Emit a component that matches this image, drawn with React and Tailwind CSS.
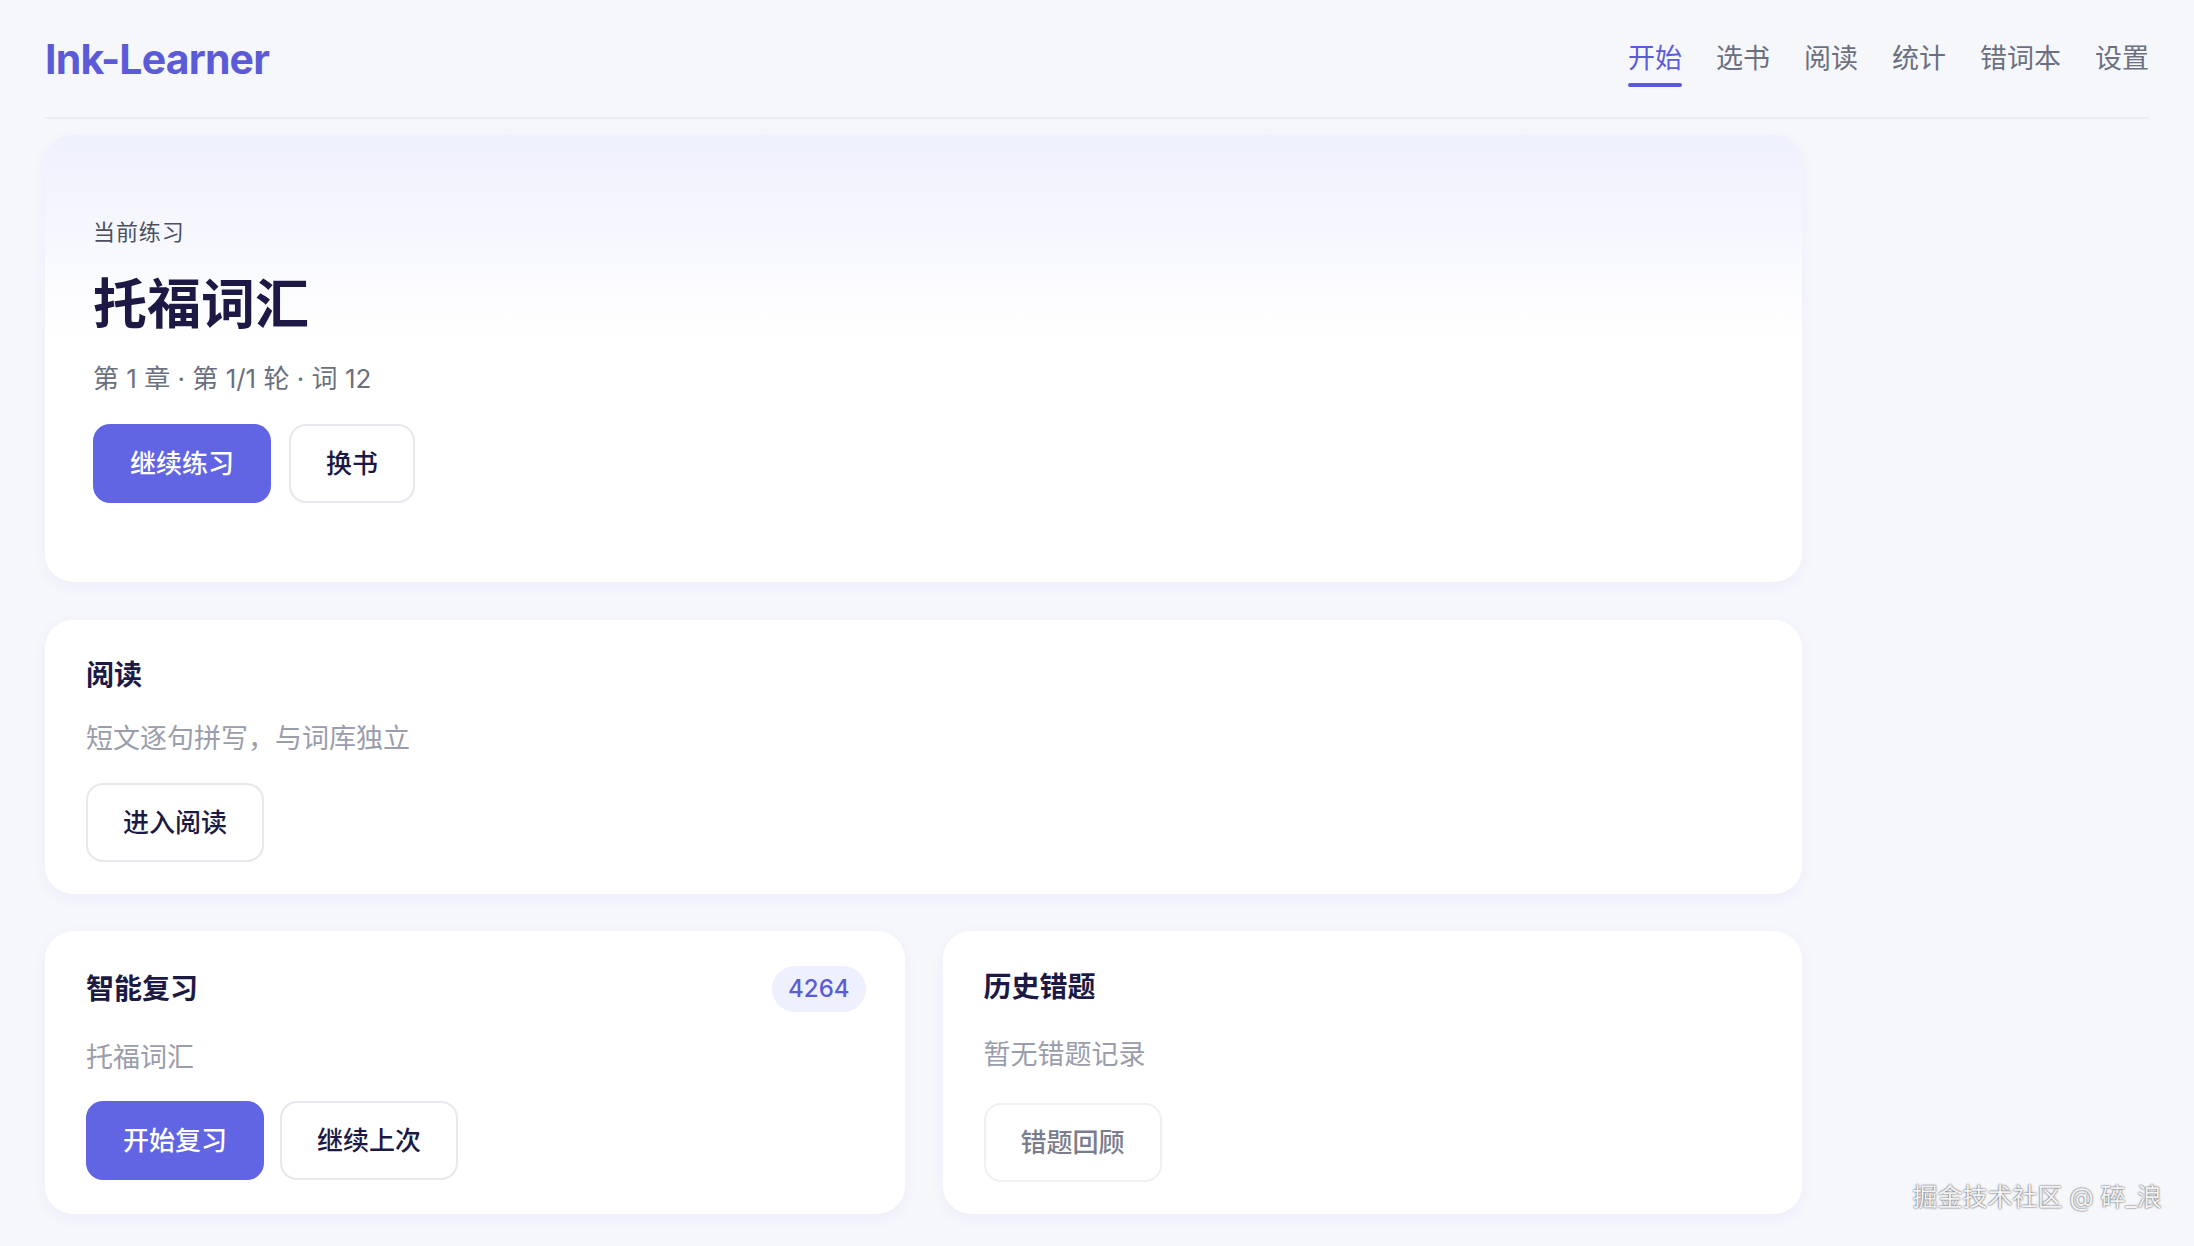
import React from "react";

// Ink-Learner home: header nav + practice cards

const NAV = ["开始", "选书", "阅读", "统计", "错词本", "设置"];

function Button({ primary, muted, children }) {
  if (primary) {
    return (
      <button className="h-[79px] rounded-[17px] bg-[#6265e3] px-[37px] text-[26px] font-medium text-white">
        {children}
      </button>
    );
  }
  return (
    <button
      className={
        "h-[79px] rounded-[17px] border-2 bg-white px-[35px] text-[26px] font-medium " +
        (muted ? "border-[#f0f0f4] text-[#7b7d8c]" : "border-[#e7e7ee] text-[#1c1a45]")
      }
    >
      {children}
    </button>
  );
}

function Card({ className = "", children }) {
  return (
    <div
      className={
        "rounded-[28px] bg-white shadow-[0_4px_14px_rgba(99,102,241,0.07)] " + className
      }
    >
      {children}
    </div>
  );
}

export default function App() {
  return (
    <div className="relative min-h-screen bg-[#f6f7fb] px-[45px] font-['Inter','Noto_Sans_CJK_SC',sans-serif] antialiased">
      <header className="flex h-[119px] items-center justify-between border-b-2 border-[#eceef4]">
        <h1 className="pt-[2px] text-[41px] font-bold leading-none tracking-[-0.02em] text-[#5b5bd8]">
          Ink-Learner
        </h1>
        <nav className="flex gap-[34px] pt-2">
          {NAV.map((item, i) => (
            <div key={item} className="flex flex-col items-stretch gap-1">
              <span
                className={
                  "text-[27px] leading-[40px] " +
                  (i === 0 ? "text-[#5b5bd8]" : "text-[#6b7080]")
                }
              >
                {item}
              </span>
              <span
                className={"h-[4px] rounded-full " + (i === 0 ? "bg-[#5b5bd8]" : "bg-transparent")}
              />
            </div>
          ))}
        </nav>
      </header>

      <main className="mt-[16px] flex w-[1757px] flex-col gap-[38px] pb-[32px]">
        {/* current practice */}
        <Card className="flex h-[447px] flex-col bg-gradient-to-b from-[#eef0fd] via-white via-45% to-white px-[48px] pt-[82px]">
          <p className="text-[22px] leading-[30px] tracking-[0.04em] text-[#4b5060]">当前练习</p>
          <h2 className="mt-[25px] text-[54px] font-bold leading-[65px] text-[#1c1a45]">托福词汇</h2>
          <p className="mt-[24px] text-[26px] leading-[36px] text-[#6b7080]">第 1 章 · 第 1/1 轮 · 词 12</p>
          <div className="mt-[27px] flex gap-[18px]">
            <Button primary>继续练习</Button>
            <Button>换书</Button>
          </div>
        </Card>

        {/* reading */}
        <Card className="flex flex-col gap-[25px] px-[41px] pb-[32px] pt-[35px]">
          <h3 className="text-[28px] font-bold leading-[40px] text-[#1c1a45]">阅读</h3>
          <p className="text-[27px] leading-[38px] text-[#9a9dab]">短文逐句拼写，与词库独立</p>
          <div className="flex">
            <Button>进入阅读</Button>
          </div>
        </Card>

        <div className="-mt-[1px] grid grid-cols-2 gap-[38px]">
          <Card className="flex flex-col pb-[32px] pl-[41px] pr-[39px] pt-[35px]">
            <div className="flex h-[46px] items-center justify-between">
              <h3 className="text-[28px] font-bold leading-[40px] text-[#1c1a45]">智能复习</h3>
              <span className="flex h-[46px] items-center rounded-full bg-[#eef0fd] px-[16px] text-[24px] font-medium text-[#5b5bd8]">
                4264
              </span>
            </div>
            <p className="mt-[27px] text-[27px] leading-[38px] text-[#9a9dab]">托福词汇</p>
            <div className="mt-[24px] flex gap-[16px]">
              <Button primary>开始复习</Button>
              <Button>继续上次</Button>
            </div>
          </Card>

          <Card className="flex flex-col px-[41px] pb-[32px] pt-[36px]">
            <h3 className="text-[28px] font-bold leading-[40px] text-[#1c1a45]">历史错题</h3>
            <p className="mt-[29px] text-[27px] leading-[38px] text-[#9a9dab]">暂无错题记录</p>
            <div className="mt-auto flex pt-[29px]">
              <Button muted>错题回顾</Button>
            </div>
          </Card>
        </div>
      </main>

      <div className="absolute bottom-[30px] right-[32px] text-[25px] text-[#f4f4f6] [text-shadow:0_0_2px_rgba(0,0,0,0.85)]">
        掘金技术社区 @ 碎_浪
      </div>
    </div>
  );
}
